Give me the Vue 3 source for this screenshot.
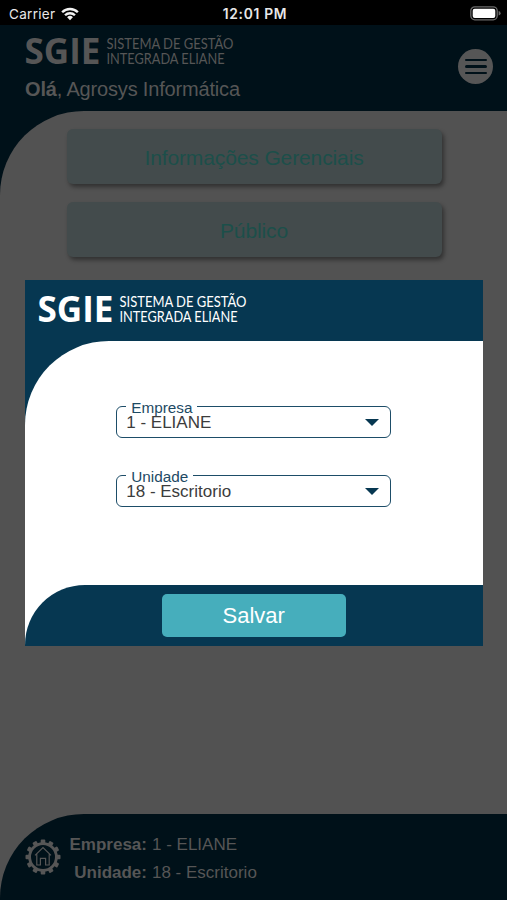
<template>
  <div class="screen">
    <div class="status-bar">
      <div class="carrier">
        <span>Carrier</span>
        <svg class="wifi" width="18" height="14" viewBox="0 0 18 14">
          <path d="M0.3 4.4 A12.4 12.4 0 0 1 17.7 4.4 L16 6.1 A10 10 0 0 0 2 6.1 Z" />
          <path d="M3.2 7.4 A8.2 8.2 0 0 1 14.8 7.4 L13.1 9.1 A5.8 5.8 0 0 0 4.9 9.1 Z" />
          <path d="M6.1 10.3 A4.1 4.1 0 0 1 11.9 10.3 L9 13.2 Z" />
        </svg>
      </div>
      <span class="clock">12:01 PM</span>
      <svg class="battery" width="31" height="15" viewBox="0 0 31 15">
        <rect x="0.8" y="0.8" width="26.4" height="13" rx="4" fill="none" stroke="#6b6b6b" stroke-width="1.3" />
        <rect x="2.7" y="2.7" width="22.6" height="9.2" rx="2" fill="#fff" />
        <path d="M28.6 5 Q30.6 5.6 30.6 7.3 Q30.6 9 28.6 9.6 Z" fill="#6b6b6b" />
      </svg>
    </div>

    <header class="header">
      <div>
        <svg class="logo" width="212" height="30" viewBox="0 0 212 30">
          <text class="logo-name" x="-0.5" y="26.5" textLength="76" lengthAdjust="spacingAndGlyphs">SGIE</text>
          <text class="logo-sub" x="81.5" y="12" textLength="127" lengthAdjust="spacingAndGlyphs">SISTEMA DE GESTÃO</text>
          <text class="logo-sub" x="81.5" y="26.7" textLength="118" lengthAdjust="spacingAndGlyphs">INTEGRADA ELIANE</text>
        </svg>
        <p class="greeting"><b>Olá</b>, {{ user }}</p>
      </div>
      <button class="menu-btn">
        <i></i>
        <i></i>
        <i></i>
      </button>
    </header>

    <main class="content">
      <div class="content-panel">
        <button v-for="item in menu" :key="item" class="menu-item">{{ item }}</button>
      </div>
    </main>

    <div class="footer-wrap">
      <footer class="footer">
        <svg class="gear" width="36" height="36" viewBox="-18 -18 36 36">
          <circle r="13.4" fill="none" stroke-width="2.8" />
          <rect
            v-for="n in 12"
            :key="n"
            class="tooth"
            x="-2.3"
            y="-17.5"
            width="4.6"
            height="4.4"
            rx="1"
            :transform="`rotate(${n * 30})`"
          />
          <path d="M-8 -1.6 L0 -9.4 L8 -1.6 M-6.2 -2.8 V8 H-2.6 V1.3 H2.6 V8 H6.2 V-2.8" fill="none" stroke-width="1.2" />
        </svg>
        <div class="footer-info">
          <template v-for="f in fields" :key="f.label">
            <b>{{ f.label }}:</b>
            <span>{{ f.value }}</span>
          </template>
        </div>
      </footer>
    </div>

    <div class="modal">
      <div class="modal-header">
        <svg class="logo" width="212" height="30" viewBox="0 0 212 30">
          <text class="logo-name" x="-0.5" y="26.5" textLength="76" lengthAdjust="spacingAndGlyphs">SGIE</text>
          <text class="logo-sub" x="81.5" y="12" textLength="127" lengthAdjust="spacingAndGlyphs">SISTEMA DE GESTÃO</text>
          <text class="logo-sub" x="81.5" y="26.7" textLength="118" lengthAdjust="spacingAndGlyphs">INTEGRADA ELIANE</text>
        </svg>
      </div>
      <div class="modal-body">
        <div class="modal-form">
          <div v-for="f in fields" :key="f.label" class="select">
            <span class="select-label">{{ f.label }}</span>
            <span class="select-value">{{ f.value }}</span>
            <span class="select-arrow"></span>
          </div>
        </div>
      </div>
      <div class="modal-footer">
        <div class="modal-actions">
          <button class="save-btn">Salvar</button>
        </div>
      </div>
    </div>
  </div>
</template>

<script setup>
import { ref } from 'vue'

const user = ref('Agrosys Informática')

const menu = ['Informações Gerenciais', 'Público']

const fields = ref([
  { label: 'Empresa', value: '1 - ELIANE' },
  { label: 'Unidade', value: '18 - Escritorio' }
])
</script>

<style>
body {
  margin: 0;
  background: #525252;
}
</style>

<style scoped>
.screen {
  position: relative;
  display: flex;
  flex-direction: column;
  width: 507px;
  height: 900px;
  overflow: hidden;
  background: #525252;
  font-family: "Liberation Sans", Arial, sans-serif;
}

button {
  border: 0;
  padding: 0;
  font-family: inherit;
}

/* Status bar */
.status-bar {
  display: grid;
  grid-template-columns: 1fr auto 1fr;
  align-items: center;
  height: 25px;
  padding: 2px 6px 0 9px;
  box-sizing: border-box;
  background: #000;
  color: #e8e8e8;
  font-family: Inter, sans-serif;
  font-size: 13.5px;
}

.carrier {
  display: flex;
  align-items: center;
  gap: 6px;
  letter-spacing: 0.3px;
}

.wifi {
  fill: #f2f2f2;
}

.clock {
  font-weight: 600;
  font-size: 13.8px;
  letter-spacing: 0.7px;
}

.battery {
  justify-self: end;
}

/* Header */
.header {
  display: flex;
  justify-content: space-between;
  height: 86px;
  padding: 12px 14px 0 25px;
  box-sizing: border-box;
  background: #001119;
  color: #565656;
}

.logo {
  display: block;
  overflow: visible;
  fill: currentColor;
}

.logo-name {
  font-family: "Open Sans", sans-serif;
  font-size: 35px;
  font-weight: 700;
}

.logo-sub {
  font-family: Lato, sans-serif;
  font-size: 14.4px;
}

.greeting {
  margin: 11px 0 0;
  font-size: 20px;
  line-height: 23px;
  letter-spacing: -0.17px;
  white-space: nowrap;
}

.menu-btn {
  display: flex;
  flex-direction: column;
  align-items: center;
  justify-content: center;
  gap: 4px;
  width: 35px;
  height: 35px;
  margin-top: 12px;
  border-radius: 50%;
  background: #565656;
}

.menu-btn i {
  width: 22px;
  height: 2.4px;
  border-radius: 2px;
  background: #001119;
}

/* Content */
.content {
  flex: 1;
  background: linear-gradient(#001119 50%, #525252 50%);
}

.content-panel {
  display: flex;
  flex-direction: column;
  align-items: center;
  gap: 18px;
  height: 100%;
  padding: 18px 0 0 1px;
  box-sizing: border-box;
  border-top-left-radius: 84px;
  background: #525252;
}

.menu-item {
  width: 375px;
  height: 55px;
  padding-top: 3px;
  border-radius: 6px;
  background: #434b4c;
  box-shadow: 2px 3px 4px rgba(0, 0, 0, 0.4);
  color: #1c4f4a;
  font-size: 21px;
  letter-spacing: -0.12px;
}

/* Footer */
.footer-wrap {
  height: 86px;
  background: #525252;
}

.footer {
  display: flex;
  height: 100%;
  padding: 16px 0 0 25px;
  box-sizing: border-box;
  border-top-left-radius: 84px;
  background: #001119;
  color: #565656;
}

.gear {
  margin-top: 9px;
  stroke: #565656;
}

.tooth {
  fill: #565656;
  stroke: none;
}

.footer-info {
  display: grid;
  grid-template-columns: auto auto;
  grid-auto-rows: 28px;
  align-content: start;
  column-gap: 5px;
  margin-left: 8.5px;
  font-size: 17px;
  line-height: 29px;
}

.footer-info b {
  text-align: right;
}

/* Modal */
.modal {
  position: absolute;
  top: 280px;
  left: 25px;
  display: flex;
  flex-direction: column;
  width: 457.5px;
  height: 366px;
  background: #063751;
}

.modal-header {
  height: 61px;
  padding: 15px 0 0 12.5px;
  box-sizing: border-box;
  color: #fff;
}

.modal-body {
  flex: 1;
  background: linear-gradient(#063751 50%, #fff 50%);
}

.modal-form {
  display: flex;
  flex-direction: column;
  align-items: center;
  gap: 37px;
  height: 100%;
  padding-top: 65px;
  box-sizing: border-box;
  border-top-left-radius: 84px;
  background: #fff;
}

.select {
  position: relative;
  display: flex;
  align-items: center;
  justify-content: space-between;
  width: 275px;
  height: 32px;
  padding: 2px 11px 0 9px;
  box-sizing: border-box;
  border: 1.5px solid #1d4d68;
  border-radius: 6px;
}

.select-label {
  position: absolute;
  top: -8px;
  left: 9px;
  padding: 0 5px;
  background: #fff;
  color: #1d4a64;
  font-size: 15.3px;
  line-height: 17px;
}

.select-value {
  position: relative;
  color: #3c3c3c;
  font-size: 17px;
  line-height: 20px;
}

.select-arrow {
  width: 0;
  height: 0;
  margin-bottom: 1px;
  border-left: 7px solid transparent;
  border-right: 7px solid transparent;
  border-top: 7px solid #063751;
}

.modal-footer {
  height: 61px;
  background: #fff;
}

.modal-actions {
  display: flex;
  align-items: center;
  justify-content: center;
  height: 100%;
  border-top-left-radius: 60px;
  background: #063751;
}

.save-btn {
  width: 184px;
  height: 43px;
  border-radius: 5px;
  background: #46aebc;
  color: #fff;
  font-size: 22px;
}
</style>
